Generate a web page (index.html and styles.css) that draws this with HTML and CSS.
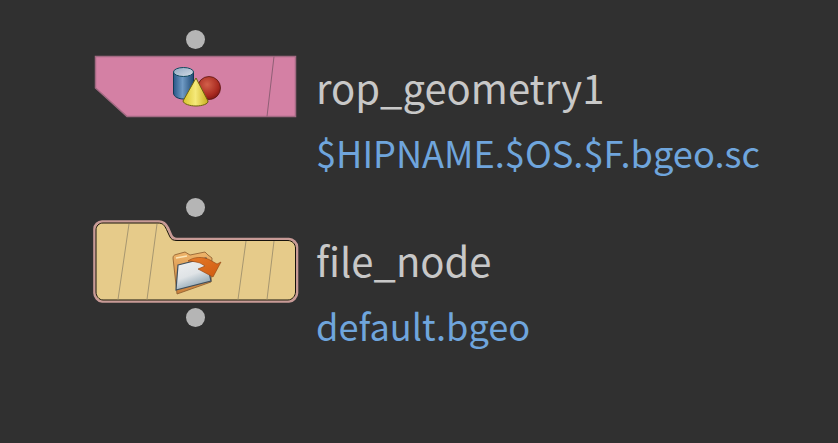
FILE: index.html
```html
<!DOCTYPE html>
<html lang="en">
<head>
<meta charset="utf-8">
<title>Network</title>
<link rel="stylesheet" href="styles.css">
</head>
<body>
<main class="canvas">
  <span class="dot dot-a"></span>
  <svg class="node node-rop" width="204" height="64" viewBox="0 0 204 64">
    <path d="M1.500 1.500H201.500V61.500H33L1.500 33Z" fill="#d480a4" stroke="#a26a82" stroke-width="1.500"/>
    <path d="M180 1.500L173 61.500" stroke="#8f5f75" stroke-width="1" fill="none"/>
    <defs>
      <linearGradient id="cyl" x1="0" x2="1" y1="0" y2="0"><stop offset="0" stop-color="#2a5788"/><stop offset=".45" stop-color="#6f9ac4"/><stop offset="1" stop-color="#1f4a76"/></linearGradient>
      <linearGradient id="cylTop" x1="0" x2="1" y1="0" y2="1"><stop offset="0" stop-color="#8ea6c0"/><stop offset="1" stop-color="#d5dde6"/></linearGradient>
      <radialGradient id="ball" cx=".42" cy=".35" r=".7"><stop offset="0" stop-color="#d2604a"/><stop offset=".7" stop-color="#a92a20"/><stop offset="1" stop-color="#7c1512"/></radialGradient>
      <linearGradient id="cone" x1="0" x2="1" y1="0" y2="0"><stop offset="0" stop-color="#d9c52c"/><stop offset=".5" stop-color="#f5e97a"/><stop offset="1" stop-color="#c8ae1c"/></linearGradient>
    </defs>
    <circle cx="115" cy="33" r="11.500" fill="url(#ball)" stroke="#5a1712" stroke-width=".8"/>
    <path d="M79.500 17V38C79.500 42 85 44 89.500 44S99.500 42 99.500 38V17Z" fill="url(#cyl)" stroke="#123a55" stroke-width="1"/>
    <ellipse cx="89.500" cy="17" rx="10" ry="4.500" fill="url(#cylTop)" stroke="#124a5f" stroke-width="1"/>
    <path d="M102 23L114 46C114.500 49 108 51 102 51S89.500 49 89 46Z" fill="url(#cone)" stroke="#6e6310" stroke-width="1" stroke-linejoin="round"/>
  </svg>
  <div class="label label-rop">
    <div class="name">rop_geometry1</div>
    <div class="path">$HIPNAME.$OS.$F.bgeo.sc</div>
  </div>

  <span class="dot dot-b"></span>
  <svg class="node node-file" width="206" height="84" viewBox="0 0 206 84">
    <path d="M9 1.500H66C71 1.500 73 4 75 8L78 15C79 18 81 19 84 19H196C200 19 204 23 204 27V73C204 77 200 81.500 196 81.500H9C5 81.500 1.500 77 1.500 73V9C1.500 5 5 1.500 9 1.500Z" fill="#e6cb8a" stroke="#c89a96" stroke-width="2.600"/>
    <path d="M10 3H65C70 3 71.500 5.500 73.500 9.500L76.500 16C78 19.500 80 20.500 84 20.500H195C199 20.500 202.500 24 202.500 28V72C202.500 76 199 80 195 80H10C6 80 3 76 3 72V10C3 6 6 3 10 3Z" fill="none" stroke="#17120c" stroke-width="1"/>
    <path d="M36 4L25 79.500M64 4L54 79.500M153 21L145 79.500M181 21L174 79.500" stroke="#a69670" stroke-width="1" fill="none"/>
    <defs>
      <linearGradient id="fback" x1="0" x2="0" y1="0" y2="1"><stop offset="0" stop-color="#eeb46a"/><stop offset="1" stop-color="#c9803c"/></linearGradient>
      <linearGradient id="ffront" x1="0" x2=".4" y1="0" y2="1"><stop offset="0" stop-color="#f1f2f3"/><stop offset=".6" stop-color="#dfe3e6"/><stop offset="1" stop-color="#8fa6b4"/></linearGradient>
      <linearGradient id="arrow" x1="0" x2="1" y1="0" y2="1"><stop offset="0" stop-color="#e57b2a"/><stop offset="1" stop-color="#cf5a10"/></linearGradient>
    </defs>
    <path d="M80 38C80 36 81 35 83 34.500L92 32L97 35L112 32L115 35L119 38L118 62L84 74Z" fill="url(#fback)" stroke="#8a5a2c" stroke-width=".8"/>
    <path d="M83 38L94 36" stroke="#fbe6b8" stroke-width="1.500" fill="none"/>
    <path d="M85 45L113 38L118 61L83 70Z" fill="url(#ffront)" stroke="#3f4f5c" stroke-width="1.200"/>
    <path d="M95 41C100 37 110 36 117 40L124 44L128 42L120 57L105 49L112 46L107 43C103 42 99 41 95 41Z" fill="url(#arrow)" stroke="#8f4310" stroke-width=".6" stroke-linejoin="round"/>
  </svg>
  <span class="dot dot-c"></span>
  <div class="label label-file">
    <div class="name">file_node</div>
    <div class="path">default.bgeo</div>
  </div>
</main>
</body>
</html>
```
FILE: styles.css
```css
html, body {
  margin: 0;
  padding: 0;
  width: 838px;
  height: 443px;
  overflow: hidden;
  background: #303030;
}
.canvas {
  position: relative;
  width: 838px;
  height: 443px;
  font-family: "Noto Sans CJK SC", "Noto Sans", sans-serif;
}
.dot {
  position: absolute;
  width: 19px;
  height: 19px;
  border-radius: 50%;
  background: #b5b5b5;
}
.dot-a { left: 186px; top: 30px; }
.dot-b { left: 186px; top: 198px; }
.dot-c { left: 186px; top: 308px; }
.node {
  position: absolute;
  display: block;
}
.node-rop { left: 94px; top: 55px; }
.node-file { left: 93px; top: 220px; }
.label {
  position: absolute;
  left: 316px;
  display: flex;
  flex-direction: column;
  gap: 13px;
  white-space: nowrap;
}
.label-rop { top: 61px; }
.label-file { top: 234px; }
.name {
  font-size: 40px;
  line-height: 52px;
  font-weight: 400;
  color: #c8c8c8;
}
.path {
  font-size: 36.2px;
  line-height: 52px;
  font-weight: 400;
  color: #6fa5dc;
}
```
